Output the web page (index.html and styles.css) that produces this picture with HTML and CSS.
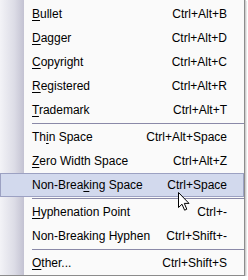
FILE: index.html
```html
<!DOCTYPE html>
<html>
<head>
<meta charset="utf-8">
<link rel="stylesheet" href="styles.css">
</head>
<body>
<div class="menu">
  <div class="item"><span class="label"><u>B</u>ullet</span><span class="key">Ctrl+Alt+B</span></div>
  <div class="item"><span class="label"><u>D</u>agger</span><span class="key">Ctrl+Alt+D</span></div>
  <div class="item"><span class="label"><u>C</u>opyright</span><span class="key">Ctrl+Alt+C</span></div>
  <div class="item"><span class="label"><u>R</u>egistered</span><span class="key">Ctrl+Alt+R</span></div>
  <div class="item"><span class="label"><u>T</u>rademark</span><span class="key">Ctrl+Alt+T</span></div>
  <div class="sep"></div>
  <div class="item"><span class="label">Th<u>i</u>n Space</span><span class="key">Ctrl+Alt+Space</span></div>
  <div class="item"><span class="label"><u>Z</u>ero Width Space</span><span class="key">Ctrl+Alt+Z</span></div>
  <div class="item active"><span class="label">Non-Brea<u>k</u>ing Space</span><span class="key">Ctrl+Space</span></div>
  <div class="sep"></div>
  <div class="item"><span class="label"><u>H</u>yphenation Point</span><span class="key">Ctrl+-</span></div>
  <div class="item"><span class="label">Non-Breaking Hyphen</span><span class="key">Ctrl+Shift+-</span></div>
  <div class="sep"></div>
  <div class="item"><span class="label"><u>O</u>ther...</span><span class="key">Ctrl+Shift+S</span></div>
  <svg class="cursor" width="13" height="20" viewBox="0 0 13 20">
    <path d="M0.5 0.5 L0.5 15.5 L4 12.2 L6.6 18.2 L8.8 17.2 L6.3 11.4 L11 11.4 Z" fill="#fff" stroke="#000" stroke-width="1" stroke-linejoin="miter"/>
  </svg>
</div>
</body>
</html>
```
FILE: styles.css
```css
html, body {
  margin: 0;
  padding: 0;
  background: #ffffff;
}
.menu {
  position: relative;
  width: 245px;
  box-sizing: border-box;
  padding-top: 2px;
  border-top: 1px solid #a8a8a8;
  border-right: 1px solid #8c8c8c;
  border-bottom: 1px solid #8c8c8c;
  background: linear-gradient(to right, #f3f3f7 0%, #dcdce6 60%, #c3c2d2 100%) 0 0 / 24px 100% no-repeat, #fafafa;
  box-shadow: 1px 1px 0 #cfcfcf, 2px 2px 0 #e8e8e8;
  margin-top: -1px;
  font-family: "Liberation Sans", Arial, sans-serif;
  font-size: 12px;
  color: #000;
}
.item {
  display: flex;
  align-items: center;
  justify-content: space-between;
  height: 24px;
  box-sizing: border-box;
  padding: 0 17px 0 32px;
  white-space: nowrap;
}
.item u {
  text-decoration: underline;
  text-underline-offset: 2px;
}
.item.active {
  background: #d2d9ed;
  border: 1px solid #9ca1c2;
  padding: 0 16px 0 31px;
  margin-right: 0;
}
.sep {
  height: 3px;
  box-sizing: border-box;
  padding-top: 1px;
  margin-left: 32px;
}
.sep::before {
  content: "";
  display: block;
  height: 1px;
  background: #8a89a8;
}
.cursor {
  position: absolute;
  left: 178px;
  top: 192px;
}
```
